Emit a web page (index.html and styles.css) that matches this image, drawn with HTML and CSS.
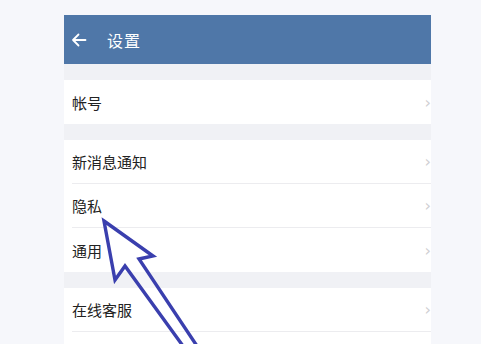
FILE: index.html
```html
<!DOCTYPE html>
<html lang="zh">
<head>
<meta charset="utf-8">
<link rel="stylesheet" href="styles.css">
</head>
<body>
<div class="screen">
  <header class="topbar">
    <svg class="back" width="16" height="16" viewBox="0 0 16 16"><path d="M14.5 8H2M7.5 2.5L2 8l5.5 5.5" fill="none" stroke="#fff" stroke-width="1.8" stroke-linecap="round" stroke-linejoin="round"/></svg>
    <span class="title">设置</span>
  </header>
  <div class="band"></div>
  <div class="group">
    <div class="row"><span>帐号</span><i class="chev">&#x203A;</i></div>
  </div>
  <div class="band"></div>
  <div class="group">
    <div class="row"><span>新消息通知</span><i class="chev">&#x203A;</i></div>
    <div class="row"><span>隐私</span><i class="chev">&#x203A;</i></div>
    <div class="row"><span>通用</span><i class="chev">&#x203A;</i></div>
  </div>
  <div class="band"></div>
  <div class="group">
    <div class="row"><span>在线客服</span><i class="chev">&#x203A;</i></div>
    <div class="row"><span></span></div>
  </div>
</div>
<svg class="pointer" width="481" height="344" viewBox="0 0 481 344">
  <polygon points="104,221 153,256 139,259 197,346 183,346 125,266 115,280" fill="rgba(255,255,255,0.35)" stroke="#3a3fae" stroke-width="3.4" stroke-linejoin="miter"/>
</svg>
</body>
</html>
```
FILE: styles.css
```css
html, body {
  margin: 0;
  padding: 0;
  background: #f6f7fb;
  overflow: hidden;
  height: 344px;
}
body {
  font-family: "Noto Sans CJK SC", "Noto Sans", sans-serif;
  position: relative;
}
.screen {
  margin: 15px 0 0 64px;
  width: 367px;
  height: 329px;
  overflow: hidden;
  background: #fff;
}
.topbar {
  height: 49px;
  background: #4f77a8;
  display: flex;
  align-items: center;
  padding-left: 7px;
  color: #fff;
}
.back {
  margin-right: 20px;
}
.title {
  font-size: 16px;
  letter-spacing: 1px;
}
.band {
  height: 16px;
  background: #f0f1f5;
}
.group {
  background: #fff;
  padding-left: 8px;
}
.row {
  height: 43px;
  display: flex;
  align-items: center;
  justify-content: space-between;
  border-bottom: 1px solid #ececef;
  font-size: 15px;
  color: #222;
}
.group .row:last-child {
  border-bottom: none;
  height: 44px;
}
.chev {
  font-style: normal;
  color: #cfcfd3;
  font-size: 16px;
  margin-right: 0;
  font-family: "DejaVu Sans", sans-serif;
}
.pointer {
  position: absolute;
  left: 0;
  top: 0;
}
```
